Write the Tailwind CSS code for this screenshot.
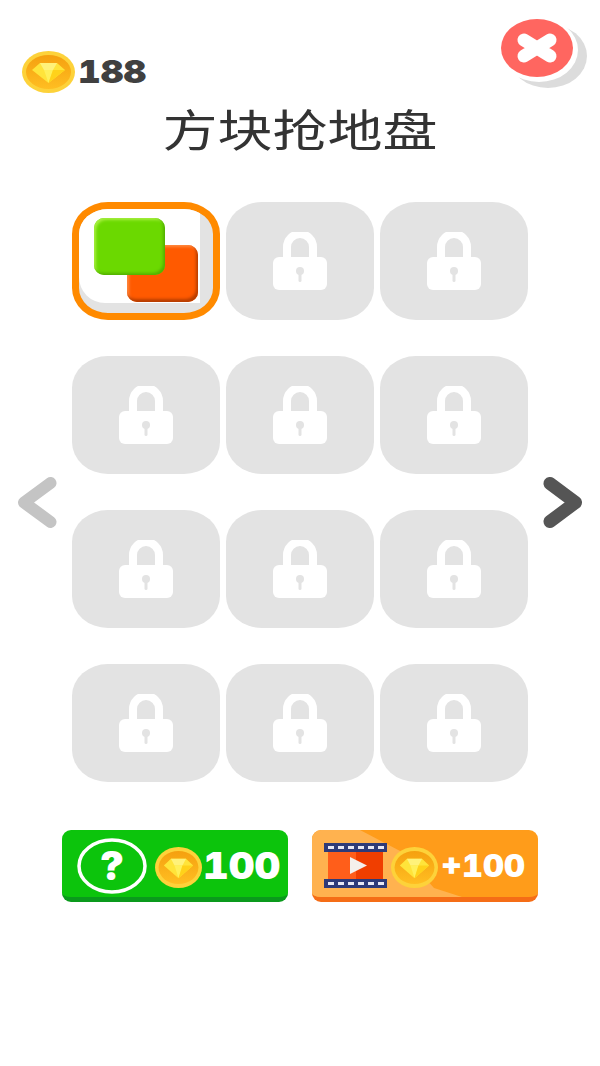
<!DOCTYPE html>
<html lang="zh-CN">
<head>
    <meta charset="UTF-8">
    <meta name="viewport" content="width=device-width, initial-scale=1.0">
    <title>方块抢地盘</title>
    <script src="https://cdn.jsdelivr.net/npm/@tailwindcss/browser@4"></script>
</head>
<body class="bg-white">
    <!-- shared icons -->
    <svg class="absolute w-0 h-0" aria-hidden="true">
        <defs>
            <linearGradient id="coinFace" x1="0" y1="0" x2="0" y2="1">
                <stop offset="0" stop-color="#f5a00f"/>
                <stop offset="1" stop-color="#ffbe22"/>
            </linearGradient>
            <symbol id="coin" viewBox="0 0 53 42" preserveAspectRatio="none">
                <ellipse cx="26.5" cy="21" rx="26.5" ry="21" fill="#fdd23a"/>
                <ellipse cx="26.5" cy="21" rx="22.5" ry="17" fill="url(#coinFace)"/>
                <polygon points="10,19 18,12 35,12 43,19 26.500,32" fill="#ffe43a"/>
                <polygon points="18,12 35,12 31,19 22,19" fill="#fff27a"/>
                <polygon points="22,19 31,19 26.500,32" fill="#fff05a"/>
                <polygon points="31,19 43,19 26.500,32" fill="#ffd21a"/>
            </symbol>
            <symbol id="lock" viewBox="0 0 54 58">
                <path d="M14 28V15a13 13 0 0 1 26 0v13" fill="none" stroke="#fff" stroke-width="8"/>
                <rect x="0" y="25" width="54" height="33" rx="6" fill="#fff"/>
                <circle cx="27" cy="39" r="4" fill="#e3e3e3"/>
                <rect x="25.5" y="40" width="3" height="10" rx="1.5" fill="#e3e3e3"/>
            </symbol>
        </defs>
    </svg>

    <div class="w-[600px] h-[1066px] overflow-hidden">
        <!-- top bar -->
        <header class="h-[93px] flex justify-between items-start pl-[22px] pr-[11px]">
            <div class="mt-[51px] flex items-center gap-[3px]">
                <svg class="w-[53px] h-[42px]"><use href="#coin"/></svg>
                <span class="font-['Inter'] font-black text-[32px] leading-none text-[#404040] tabular-nums origin-left scale-x-[1.1]">188</span>
            </div>
            <svg class="mt-[18px] w-[89px] h-[72px]" viewBox="0 0 89 72">
                <ellipse cx="48" cy="38" rx="39" ry="32" fill="#dcdcdc"/>
                <ellipse cx="39" cy="32" rx="39" ry="32" fill="#fff"/>
                <ellipse cx="37" cy="30" rx="36" ry="29" fill="#ff6660"/>
                <path d="M24 22 L50 38 M50 22 L24 38" stroke="#fff" stroke-width="13" stroke-linecap="round"/>
            </svg>
        </header>

        <h1 class="mt-[13px] text-center font-['Noto_Sans_CJK_SC',sans-serif] font-normal text-[44px] leading-[44px] text-[#333] scale-x-[1.25]">方块抢地盘</h1>

        <!-- level grid with arrows -->
        <main class="mt-[52px] flex justify-between items-start pl-[17px] pr-[15px]">
            <svg class="mt-[274px] w-[41px] h-[53px]" viewBox="0 0 41 53">
                <path d="M33.500 7 L7 26.500 L33.500 46" fill="none" stroke="#c4c4c4" stroke-width="12" stroke-linecap="round" stroke-linejoin="round"/>
            </svg>

            <div class="grid grid-cols-[repeat(3,148px)] auto-rows-[118px] gap-x-[6px] gap-y-[36px]">
                <div class="relative rounded-[36px/32px] border-[7px] border-[#ff8a00] bg-[#e3e3e3] overflow-hidden">
                    <div class="w-[121px] h-[94px] bg-white rounded-bl-[26px]"></div>
                    <div class="absolute left-[48px] top-[36px] w-[71px] h-[57px] rounded-[10px] bg-[#ff5a00] shadow-[inset_-2px_-3px_3px_#b83e00,inset_2px_2px_3px_#ff8a40]"></div>
                    <div class="absolute left-[15px] top-[9px] w-[71px] h-[57px] rounded-[10px] bg-[#6bd900] shadow-[inset_-2px_-2px_3px_#52b000,inset_2px_2px_3px_#a8f040]"></div>
                </div>
                <div class="rounded-[36px/32px] bg-[#e3e3e3] flex items-center justify-center"><svg class="w-[54px] h-[58px]"><use href="#lock"/></svg></div>
                <div class="rounded-[36px/32px] bg-[#e3e3e3] flex items-center justify-center"><svg class="w-[54px] h-[58px]"><use href="#lock"/></svg></div>
                <div class="rounded-[36px/32px] bg-[#e3e3e3] flex items-center justify-center"><svg class="w-[54px] h-[58px]"><use href="#lock"/></svg></div>
                <div class="rounded-[36px/32px] bg-[#e3e3e3] flex items-center justify-center"><svg class="w-[54px] h-[58px]"><use href="#lock"/></svg></div>
                <div class="rounded-[36px/32px] bg-[#e3e3e3] flex items-center justify-center"><svg class="w-[54px] h-[58px]"><use href="#lock"/></svg></div>
                <div class="rounded-[36px/32px] bg-[#e3e3e3] flex items-center justify-center"><svg class="w-[54px] h-[58px]"><use href="#lock"/></svg></div>
                <div class="rounded-[36px/32px] bg-[#e3e3e3] flex items-center justify-center"><svg class="w-[54px] h-[58px]"><use href="#lock"/></svg></div>
                <div class="rounded-[36px/32px] bg-[#e3e3e3] flex items-center justify-center"><svg class="w-[54px] h-[58px]"><use href="#lock"/></svg></div>
                <div class="rounded-[36px/32px] bg-[#e3e3e3] flex items-center justify-center"><svg class="w-[54px] h-[58px]"><use href="#lock"/></svg></div>
                <div class="rounded-[36px/32px] bg-[#e3e3e3] flex items-center justify-center"><svg class="w-[54px] h-[58px]"><use href="#lock"/></svg></div>
                <div class="rounded-[36px/32px] bg-[#e3e3e3] flex items-center justify-center"><svg class="w-[54px] h-[58px]"><use href="#lock"/></svg></div>
            </div>

            <svg class="mt-[274px] w-[43px] h-[53px]" viewBox="0 0 43 53">
                <path d="M8 7.500 L33.500 26.500 L8 45.500" fill="none" stroke="#555" stroke-width="13" stroke-linecap="round" stroke-linejoin="round"/>
            </svg>
        </main>

        <!-- bottom buttons -->
        <div class="mt-[48px] flex justify-center gap-[24px]">
            <button class="w-[226px] h-[72px] rounded-[9px] bg-[#0cc40c] border-b-[5px] border-[#0a9a1c] flex items-center pl-[15px] pt-[4px]">
                <svg class="w-[70px] h-[56px]" viewBox="0 0 70 56">
                    <ellipse cx="35" cy="28" rx="33" ry="26" fill="none" stroke="#fff" stroke-width="3.500"/>
                    <text x="35" y="42" text-anchor="middle" font-family="Inter" font-weight="900" font-size="40" fill="#fff">?</text>
                </svg>
                <svg class="ml-[8px] mt-[4px] w-[47px] h-[41px]"><use href="#coin"/></svg>
                <span class="ml-[1px] font-['Inter'] font-black text-[37px] leading-none text-white tabular-nums origin-left scale-x-[1.08]">100</span>
            </button>
            <button class="relative w-[226px] h-[72px] rounded-[9px] bg-[#ff9c1a] border-b-[5px] border-[#f56d16] flex items-center pl-[12px] pt-[4px] overflow-hidden">
                <svg class="absolute left-0 top-0 w-[226px] h-[67px]" viewBox="0 0 226 67">
                    <polygon points="0,0 48,0 90,22 122,58 150,67 0,67" fill="#ffb24f"/>
                </svg>
                <svg class="relative w-[64px] h-[46px]" viewBox="0 0 64 46">
                    <rect x="4" y="8" width="28" height="30" fill="#ff5e1a"/>
                    <rect x="32" y="8" width="27" height="30" fill="#f03e00"/>
                    <rect x="0" y="0" width="63" height="9" fill="#2e3a78"/>
                    <rect x="0" y="36" width="63" height="9" fill="#2e3a78"/>
                    <path d="M4 4.500h58M4 40.500h58" stroke="#e8e8f4" stroke-width="3" stroke-dasharray="6 4"/>
                    <polygon points="26,14 26,31 43,22.500" fill="#f4f0ec"/>
                </svg>
                <svg class="relative ml-[3px] mt-[4px] w-[47px] h-[41px]"><use href="#coin"/></svg>
                <span class="relative ml-[3px] font-['Inter'] font-black text-[31px] leading-none text-white tabular-nums origin-left scale-x-[1.05]">+100</span>
            </button>
        </div>
    </div>
</body>
</html>
